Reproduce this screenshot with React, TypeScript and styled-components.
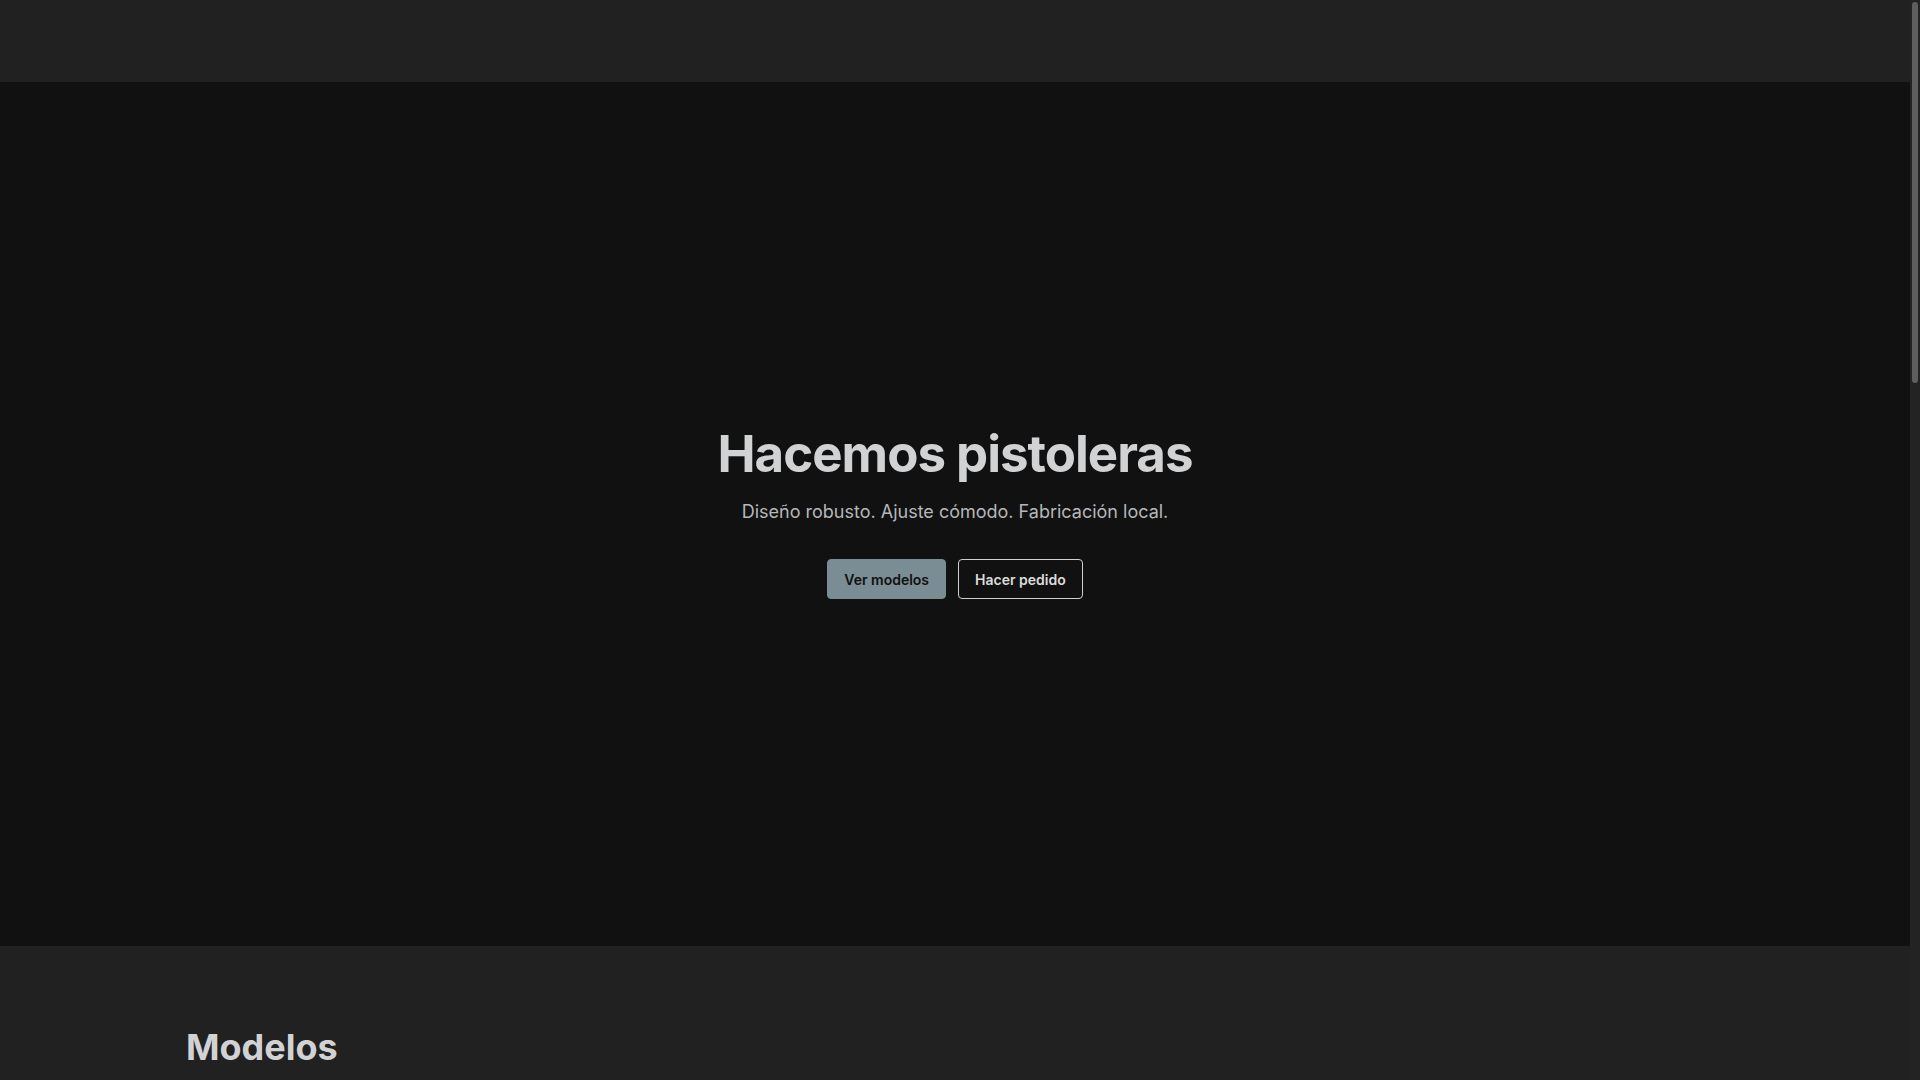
import React from 'react';
import styled, { createGlobalStyle } from 'styled-components';

const GlobalStyle = createGlobalStyle`
  html {
    color-scheme: dark;
  }
  body {
    margin: 0;
    padding-right: 10px;
    background: #212121;
    color: #d1d2d4;
    font-family: Inter, "Noto Sans", sans-serif;
  }
  * {
    box-sizing: border-box;
  }
`

// stand-in for the browser's dark overlay scrollbar seen in the capture
const ScrollTrack = styled.div`
  position: fixed;
  top: 0;
  right: 0;
  width: 10px;
  height: 100vh;
  background: #232323;
`

const ScrollThumb = styled.div`
  position: absolute;
  top: 2px;
  left: 2px;
  width: 6px;
  height: 381px;
  border-radius: 3px;
  background: #5e5e5e;
`

const Header = styled.header`
  height: 82px;
  background: #212121;
`

const Hero = styled.section`
  min-height: 864px;
  background: #111111;
  display: flex;
  flex-direction: column;
  align-items: center;
  justify-content: center;
  text-align: center;
  padding-bottom: 6px;
`

const Title = styled.h1`
  margin: 0;
  font-size: 51px;
  line-height: 1.2;
  font-weight: 700;
  color: #d1d2d4;
  letter-spacing: -1px;
`

const Lead = styled.p`
  margin: 14px 0 0;
  font-size: 18px;
  line-height: 1.5;
  color: #b6b7ba;
`

const Actions = styled.div`
  display: flex;
  gap: 12px;
  margin-top: 34px;
`

const Button = styled.a<{ $primary?: boolean }>`
  display: inline-flex;
  align-items: center;
  justify-content: center;
  height: 40px;
  padding: 0 16px;
  border-radius: 4px;
  font-size: 14px;
  font-weight: 600;
  text-decoration: none;
  cursor: pointer;
  background: ${p => (p.$primary ? '#7a8c94' : 'transparent')};
  color: ${p => (p.$primary ? '#111111' : '#dcdcdc')};
  border: 1px solid ${p => (p.$primary ? '#7a8c94' : '#cfcfcf')};
`

const Models = styled.section`
  background: #212121;
  padding: 80px 0;
  min-height: 2100px;
`

const Container = styled.div`
  max-width: 1538px;
  margin: 0 auto;
`

const SectionTitle = styled.h2`
  margin: 0;
  font-size: 36px;
  line-height: 1.2;
  font-weight: 700;
  color: #d1d2d4;
`

const Grid = styled.div`
  display: grid;
  grid-template-columns: repeat(3, 1fr);
  gap: 24px;
  margin-top: 32px;
`

const Card = styled.div`
  height: 420px;
  border-radius: 6px;
  background: #2a2a2a;
`

const models = ['Clásica', 'Táctica', 'Compacta', 'Tobillera', 'Sobaquera', 'Cintura']

function App() {
  return <>
    <GlobalStyle />
    <Header />
    <Hero>
      <Title>Hacemos pistoleras</Title>
      <Lead>Diseño robusto. Ajuste cómodo. Fabricación local.</Lead>
      <Actions>
        <Button $primary href="#modelos">Ver modelos</Button>
        <Button href="#pedido">Hacer pedido</Button>
      </Actions>
    </Hero>
    <Models id="modelos">
      <Container>
        <SectionTitle>Modelos</SectionTitle>
        <Grid>
          {models.map(m => <Card key={m} aria-label={m} />)}
        </Grid>
      </Container>
    </Models>
    <ScrollTrack>
      <ScrollThumb />
    </ScrollTrack>
  </>
}

export default App;
